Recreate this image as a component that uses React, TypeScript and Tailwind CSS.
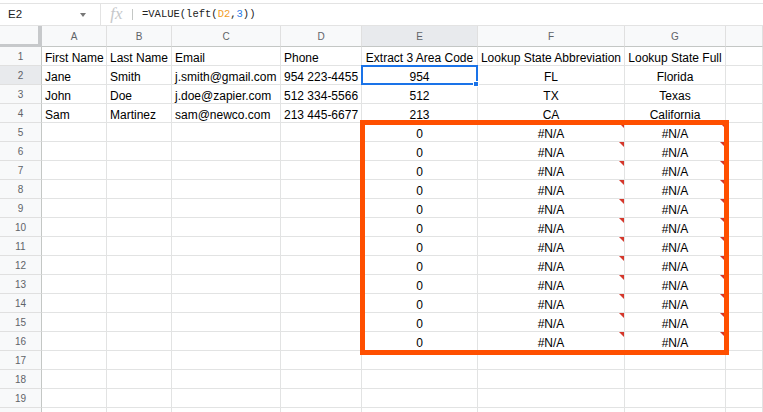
import React from "react";

const COLS = ["A", "B", "C", "D", "E", "F", "G", ""];

type Row = { cells: string[]; err?: boolean };

const rows: Row[] = [
  { cells: ["First Name", "Last Name", "Email", "Phone", "Extract 3 Area Code", "Lookup State Abbreviation", "Lookup State Full", ""] },
  { cells: ["Jane", "Smith", "j.smith@gmail.com", "954 223-4455", "954", "FL", "Florida", ""] },
  { cells: ["John", "Doe", "j.doe@zapier.com", "512 334-5566", "512", "TX", "Texas", ""] },
  { cells: ["Sam", "Martinez", "sam@newco.com", "213 445-6677", "213", "CA", "California", ""] },
];
for (let i = 0; i < 12; i++) {
  rows.push({ cells: ["", "", "", "", "0", "#N/A", "#N/A", ""], err: true });
}
for (let i = 0; i < 4; i++) {
  rows.push({ cells: ["", "", "", "", "", "", "", ""] });
}

export default function App() {
  return (
    <div
      className="w-[763px] h-[412px] overflow-hidden bg-white text-black"
      style={{ fontFamily: '"Liberation Sans", Arial, sans-serif' }}
    >
      <div className="h-[3px]" />
      {/* Formula bar */}
      <div className="h-[23px] border-t border-b border-[#e3e3e3] flex items-center">
        <div className="w-[101px] h-full border-r border-[#e3e3e3] flex items-center justify-between pl-[8px] pr-[14px]">
          <span className="text-[11.5px] text-[#222]">E2</span>
          <span className="w-0 h-0 border-t-[4px] border-t-[#777] border-l-[3px] border-l-transparent border-r-[3px] border-r-transparent" />
        </div>
        <div className="w-[31px] flex justify-center">
          <span
            className="italic text-[17px] leading-none text-[#c6c8ca] -mt-[2px]"
            style={{ fontFamily: '"Liberation Serif", "Times New Roman", serif' }}
          >
            fx
          </span>
        </div>
        <div className="w-px h-[11px] bg-[#c4c7c5]" />
        <div
          className="pl-[9px] text-[10.5px] text-[#222] whitespace-nowrap"
          style={{ fontFamily: '"Liberation Mono", "Courier New", monospace' }}
        >
          =VALUE(left(<span className="text-[#f29d1f]">D2</span>,<span className="text-[#2d7be5]">3</span>))
        </div>
      </div>

      {/* Grid */}
      <div className="relative">
        <div className="grid grid-cols-[42px_65px_65px_109px_81px_116px_147px_101px_1fr] grid-rows-[21px] auto-rows-[19px]">
          {/* corner */}
          <div className="bg-[#f8f9fa] border-r-[4px] border-b-[3px] border-[#c7c9cb]" />
          {COLS.map((c, i) => (
            <div
              key={"h" + i}
              className={`flex items-center justify-center text-[10px] text-[#5f6368] border-r border-b border-r-[#e0e0e0] border-b-[#c4c7c5] ${
                c === "E" ? "bg-[#e8eaed]" : "bg-[#f8f9fa]"
              }`}
            >
              {c}
            </div>
          ))}
          {rows.map((row, ri) => (
            <React.Fragment key={"r" + ri}>
              <div
                className={`flex items-center justify-center text-[10px] text-[#5f6368] border-r border-b border-r-[#c4c7c5] border-b-[#e0e0e0] ${
                  ri === 1 ? "bg-[#e8eaed]" : "bg-[#f8f9fa]"
                }`}
              >
                {ri < 19 ? ri + 1 : ""}
              </div>
              {row.cells.map((txt, ci) => {
                const center = ci >= 4 && ci <= 6;
                const selected = ri === 1 && ci === 4;
                const tri = row.err && (ci === 5 || ci === 6);
                return (
                  <div
                    key={"c" + ci}
                    className={`relative flex items-end whitespace-nowrap text-[12px] leading-[14px] border-r border-b border-[#e2e3e3] ${
                      center ? "justify-center" : "pl-[3px]"
                    }`}
                  >
                    {txt}
                    {tri && (
                      <span className="absolute top-0 right-0 w-0 h-0 border-t-[5px] border-t-[#d5372b] border-l-[5px] border-l-transparent" />
                    )}
                    {selected && (
                      <>
                        <span className="absolute left-[-1px] top-[-1px] right-[-1px] bottom-[-1px] border-2 border-[#1a73e8] z-10" />
                        <span className="absolute right-[-2px] bottom-[-3px] w-[6px] h-[6px] bg-[#1a73e8] border border-white z-20" />
                      </>
                    )}
                  </div>
                );
              })}
            </React.Fragment>
          ))}
        </div>
        {/* Orange highlight box */}
        <div className="absolute left-[360px] top-[94px] w-[369px] h-[235px] border-[5px] border-[#ff4f00] z-30 pointer-events-none" />
      </div>
    </div>
  );
}
